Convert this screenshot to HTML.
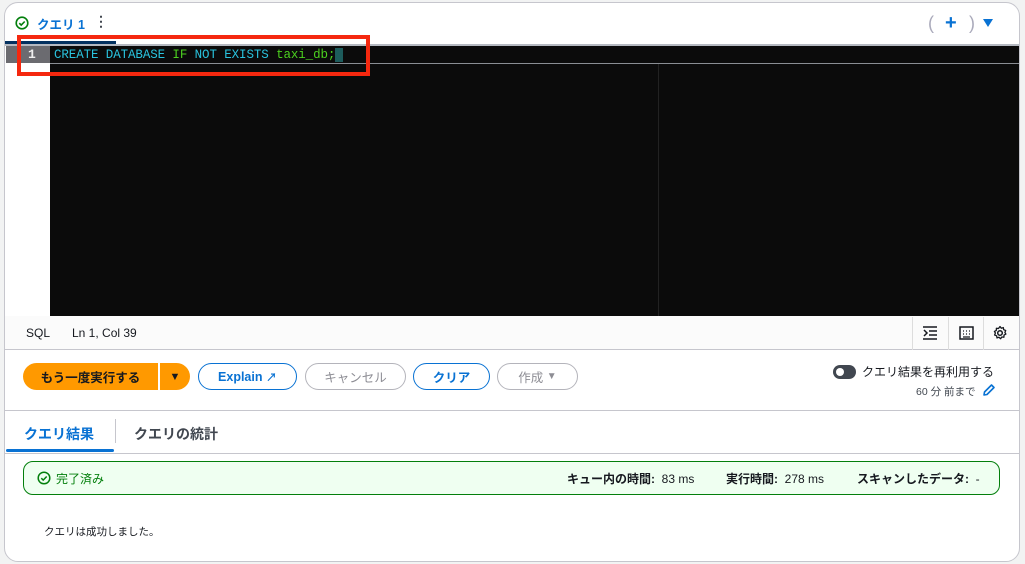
<!DOCTYPE html>
<html><head><meta charset="utf-8"><style>
*{box-sizing:border-box;margin:0;padding:0}
body{width:1025px;height:564px;background:#f2f3f3;font-family:"Liberation Sans","Noto Sans CJK JP",sans-serif;position:relative;overflow:hidden;color:#16191f}
.card{position:absolute;left:4px;top:2px;width:1016px;height:560px;background:#fff;border:1px solid #c6c6cd;border-radius:14px;overflow:hidden}
.abs{position:absolute}
.btn{position:absolute;top:363px;height:27px;border-radius:14px;border:1px solid #0972d3;color:#0972d3;font-size:12.5px;font-weight:bold;display:flex;align-items:center;justify-content:center;background:#fff}
.dis{border-color:#b4b4bb;color:#8d8d94;font-weight:normal}
</style></head><body>
<div class="card"></div>
<!-- tab header -->
<svg class="abs" style="left:15px;top:16px" width="14" height="14" viewBox="0 0 14 14"><circle cx="7" cy="7" r="5.8" fill="none" stroke="#037f0c" stroke-width="1.6"/><path d="M4.3 7.2l1.9 1.9 3.5-3.6" fill="none" stroke="#037f0c" stroke-width="1.6"/></svg>
<div class="abs" style="left:37px;top:14px;font-size:12.5px;font-weight:bold;color:#0972d3">クエリ 1</div>
<div class="abs" style="left:94px;top:13px;font-size:14px;font-weight:bold;color:#414750">⋮</div>
<div class="abs" style="left:5px;top:41px;width:111px;height:3px;background:#033160"></div>
<div class="abs" style="left:928px;top:13px;font-size:18px;color:#aab">(</div>
<div class="abs" style="left:945px;top:12px;font-size:20px;font-weight:bold;color:#0972d3">+</div>
<div class="abs" style="left:969px;top:13px;font-size:18px;color:#aab">)</div>
<div class="abs" style="left:983px;top:19px;width:0;height:0;border-left:5px solid transparent;border-right:5px solid transparent;border-top:8px solid #0972d3"></div>
<!-- editor -->
<div class="abs" style="left:5px;top:44px;width:1014px;height:2px;background:#b5b9c1"></div>
<div class="abs" style="left:50px;top:46px;width:969px;height:270px;background:#0b0b0b"></div>
<div class="abs" style="left:6px;top:46px;width:44px;height:17px;background:#6b6b70;color:#eee;font-family:'Liberation Mono',monospace;font-size:13px;font-weight:bold;padding-left:22px;line-height:18px">1</div>
<div class="abs" style="left:50px;top:63px;width:969px;height:1px;background:#8a8e94"></div>
<div class="abs" style="left:658px;top:64px;width:1px;height:252px;background:#222"></div>
<div class="abs" style="left:54px;top:47px;font-family:'Liberation Mono',monospace;font-size:12.5px;line-height:17px;color:#2ac3de;letter-spacing:-0.1px;white-space:pre">CREATE DATABASE <span style="color:#4cd11f">IF</span> NOT EXISTS <span style="color:#4cd11f">taxi_db;</span><span style="background:#1d5c5c"> </span></div>
<div class="abs" style="left:17px;top:35px;width:353px;height:41px;border:4px solid #f5280f"></div>
<!-- status bar -->
<div class="abs" style="left:5px;top:316px;width:1014px;height:34px;background:#fbfbfb;border-bottom:1px solid #c6c6cd"></div>
<div class="abs" style="left:26px;top:326px;font-size:12px">SQL</div>
<div class="abs" style="left:72px;top:326px;font-size:12px">Ln 1, Col 39</div>
<div class="abs" style="left:912px;top:317px;width:1px;height:33px;background:#ddd"></div>
<div class="abs" style="left:948px;top:317px;width:1px;height:33px;background:#ddd"></div>
<div class="abs" style="left:983px;top:317px;width:1px;height:33px;background:#ddd"></div>
<svg class="abs" style="left:922px;top:326px" width="16" height="14" viewBox="0 0 16 14"><path d="M1 1h14M1 13h14M7 5h8M7 9h8M2 4l3 3-3 3" fill="none" stroke="#16191f" stroke-width="1.5"/></svg>
<svg class="abs" style="left:959px;top:326px" width="15" height="14" viewBox="0 0 15 14"><rect x="1" y="1" width="13" height="12" fill="none" stroke="#16191f" stroke-width="1.5"/><path d="M4 5h1M7 5h1M10 5h1M4 8h1M7 8h1M10 8h1M4 11h7" stroke="#16191f" stroke-width="1.3"/></svg>
<svg class="abs" style="left:992px;top:325px" width="16" height="16" viewBox="0 0 16 16"><circle cx="8" cy="8" r="2.3" fill="none" stroke="#16191f" stroke-width="1.5"/><path d="M8 1.5l1.3 1.7 2-.6.4 2.1 2 .8-.8 2 1 1.6-1.9 1-.1 2.1-2.1-.2-1.2 1.7-1.6-1.4-2 .6-.4-2.1-2-.8.8-2-1-1.6 1.9-1 .1-2.1 2.1.2z" fill="none" stroke="#16191f" stroke-width="1.3" stroke-linejoin="round"/></svg>
<!-- buttons -->
<div class="btn" style="left:23px;width:135px;border:none;background:#ff9900;color:#16191f;border-radius:14px 0 0 14px">もう一度実行する</div>
<div class="btn" style="left:160px;width:30px;border:none;background:#ff9900;color:#16191f;border-radius:0 14px 14px 0;font-size:11px">▼</div>
<div class="btn" style="left:198px;width:99px">Explain&nbsp;<span style="font-size:11px">↗</span></div>
<div class="btn dis" style="left:305px;width:101px">キャンセル</div>
<div class="btn" style="left:413px;width:77px">クリア</div>
<div class="btn dis" style="left:497px;width:81px">作成&nbsp;<span style="font-size:10px">▼</span></div>
<div class="abs" style="left:833px;top:365px;width:23px;height:14px;border-radius:7px;background:#414750"></div>
<div class="abs" style="left:836px;top:368px;width:8px;height:8px;border-radius:4px;background:#fff"></div>
<div class="abs" style="left:862px;top:363px;font-size:12px;color:#16191f">クエリ結果を再利用する</div>
<div class="abs" style="left:916px;top:384px;font-size:10.5px;color:#414750">60 分 前まで</div>
<svg class="abs" style="left:982px;top:383px" width="14" height="14" viewBox="0 0 14 14"><path d="M2 12l.5-3L9.5 2l2.5 2.5-7 7z" fill="none" stroke="#0972d3" stroke-width="1.6" stroke-linejoin="round"/></svg>
<div class="abs" style="left:5px;top:410px;width:1014px;height:1px;background:#c6c6cd"></div>
<!-- tabs -->
<div class="abs" style="left:24px;top:424px;font-size:14px;font-weight:bold;color:#0972d3">クエリ結果</div>
<div class="abs" style="left:6px;top:449px;width:108px;height:3px;border-radius:2px;background:#0972d3"></div>
<div class="abs" style="left:115px;top:419px;width:1px;height:24px;background:#c6c6cd"></div>
<div class="abs" style="left:134px;top:424px;font-size:14px;font-weight:bold;color:#414750">クエリの統計</div>
<div class="abs" style="left:5px;top:453px;width:1014px;height:1px;background:#c6c6cd"></div>
<!-- success -->
<div class="abs" style="left:23px;top:461px;width:977px;height:34px;border:1px solid #037f0c;border-radius:10px;background:#effff1"></div>
<svg class="abs" style="left:37px;top:471px" width="14" height="14" viewBox="0 0 14 14"><circle cx="7" cy="7" r="5.8" fill="none" stroke="#037f0c" stroke-width="1.5"/><path d="M4.3 7.2l1.9 1.9 3.5-3.6" fill="none" stroke="#037f0c" stroke-width="1.5"/></svg>
<div class="abs" style="left:56px;top:470px;font-size:12px;color:#037f0c">完了済み</div>
<div class="abs" style="left:567px;top:470px;font-size:12px;white-space:pre"><b>キュー内の時間:</b>  83 ms</div>
<div class="abs" style="left:726px;top:470px;font-size:12px;white-space:pre"><b>実行時間:</b>  278 ms</div>
<div class="abs" style="left:857px;top:470px;font-size:12px;white-space:pre"><b>スキャンしたデータ:</b>  -</div>
<div class="abs" style="left:44px;top:524px;font-size:10.5px">クエリは成功しました。</div>
</body></html>
